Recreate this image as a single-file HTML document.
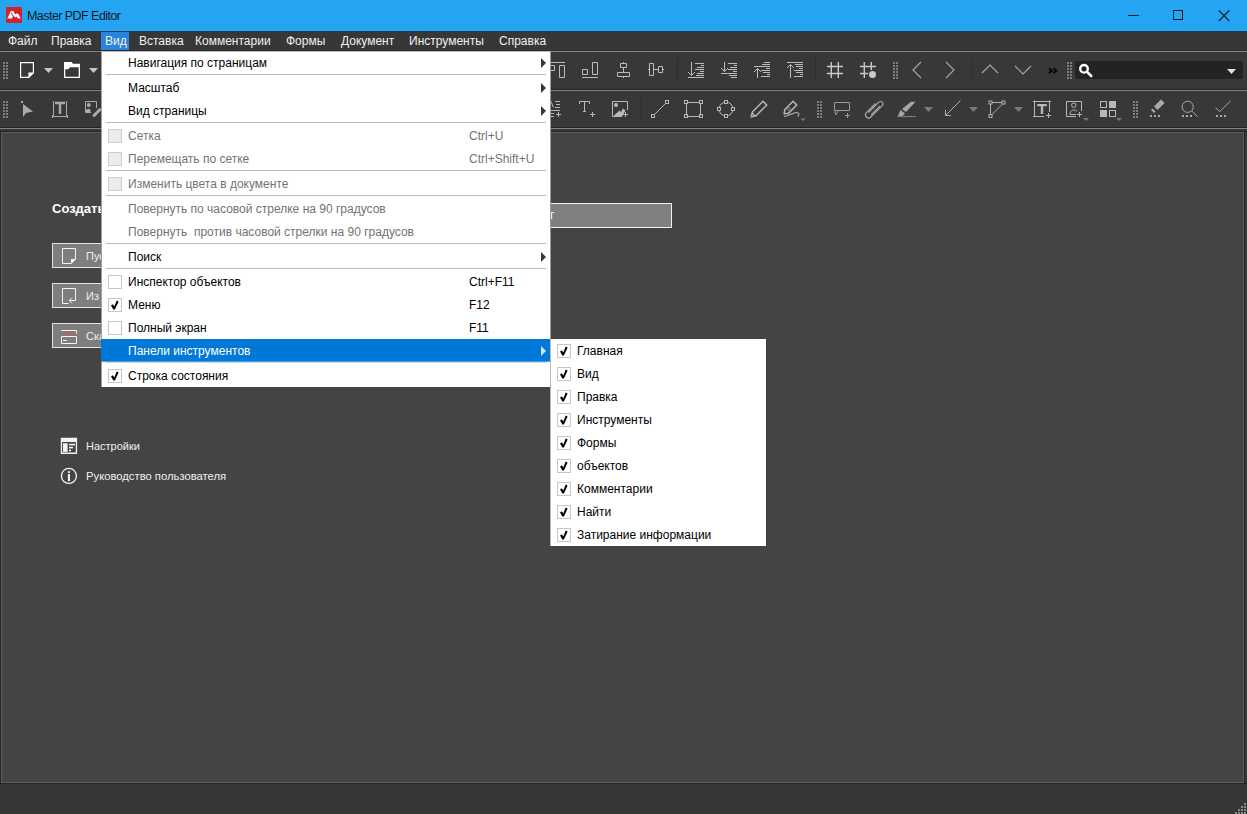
<!DOCTYPE html>
<html><head><meta charset="utf-8">
<style>
*{margin:0;padding:0;box-sizing:border-box}
html,body{width:1247px;height:814px;overflow:hidden;background:#373737;font-family:"Liberation Sans",sans-serif;font-size:12px}
.a{position:absolute}
#title{left:0;top:0;width:1247px;height:31px;background:#25a4f1}
#tline{left:0;top:31px;width:1247px;height:1px;background:#163e58}
#menubar{left:0;top:32px;width:1247px;height:19px;background:#373737}
.mb{position:absolute;top:32px;line-height:19px;color:#f0f0f0;white-space:nowrap}
.hl{left:0;width:1247px;height:1px;background:#828282}
.dl{left:0;width:1247px;height:1px}
#tb1{left:0;top:52px;width:1247px;height:38px;background:#383838}
#tb2{left:0;top:91px;width:1247px;height:37px;background:#383838}
#content{left:1px;top:132px;width:1243px;height:651px;background:#444444;border:1px solid #5e5e5e}
#menu{left:101px;top:51px;width:449px;height:336px;background:#fff}
.mi{position:absolute;left:0;width:449px;height:23px;line-height:23px;color:#000;white-space:nowrap}
.mi .t{position:absolute;left:27px;top:1px}
.mi .k{position:absolute;left:368px;top:1px}
.dis{color:#737373}
.sep{position:absolute;left:5px;width:440px;height:1px;background:#bdbdbd}
.cb{position:absolute;left:7px;top:5px;width:14px;height:14px;border:1px solid #c6c6c6;background:#fff}
.cbd{background:#ececec;border-color:#cdcdcd}
.arr{position:absolute;left:440px;top:7px;width:0;height:0;border-top:5px solid transparent;border-bottom:5px solid transparent;border-left:5px solid #383838}
#sub{left:550px;top:339px;width:216px;height:207px;background:#fff;border-left:1px solid #b9b9b9}
.si{position:absolute;left:0;width:216px;height:23px;line-height:23px;color:#000;white-space:nowrap}
.si .t{position:absolute;left:26px;top:1px}
.si .cb{left:6px}
.ck{position:absolute;left:1px;top:1px}
.btn{left:52px;width:300px;height:25px;background:#7e7e7e;border:1px solid #e4e4e4;color:#f0f0f0;font-size:11px;line-height:23px;white-space:nowrap}
.btn span{position:absolute;left:33px;top:1px}
.grip{position:absolute;width:6px;height:18px;background-image:radial-gradient(#8a8a8a 0,#8a8a8a 0) ;}
</style></head><body>
<div id="title" class="a"></div>
<div id="tline" class="a"></div>
<!-- app icon -->
<svg class="a" style="left:6px;top:7px" width="16" height="16" viewBox="6 7 16 16">
<rect x="6" y="7" width="16" height="16" rx="1.2" fill="#d51f2c"/>
<path d="M7.3 18.6 L10.8 11 L13.4 11 L15.2 14.6 L16.8 13.3 L18.6 14.2 L20.7 18.6 L17.7 18.6 L16.6 16.6 L15 17.4 L13.2 15.2 L12 18.6 Z" fill="#fff"/>
<path d="M11.5 12.5 L12.6 16" stroke="#d51f2c" stroke-width="0.9"/>
</svg>
<div class="a" style="left:27px;top:7px;line-height:18px;font-size:12.5px;color:#0b1b2e;letter-spacing:-0.55px;white-space:nowrap">Master PDF Editor</div>
<!-- window controls -->
<div class="a" style="left:1128px;top:15px;width:11px;height:1px;background:#0b1b2e"></div>
<div class="a" style="left:1173px;top:10px;width:10px;height:10px;border:1px solid #0b1b2e"></div>
<svg class="a" style="left:1218px;top:10px" width="12" height="12" viewBox="0 0 12 12"><path d="M0.8 0.5 L11.3 11 M11.3 0.5 L0.8 11" stroke="#0b1b2e" stroke-width="1.1"/></svg>

<div id="menubar" class="a"></div>
<div class="a" style="left:101px;top:32px;width:28px;height:19px;background:#2a83dc"></div>
<div class="mb" style="left:8px">Файл</div>
<div class="mb" style="left:51px">Правка</div>
<div class="mb" style="left:105px">Вид</div>
<div class="mb" style="left:139px">Вставка</div>
<div class="mb" style="left:195px">Комментарии</div>
<div class="mb" style="left:286px">Формы</div>
<div class="mb" style="left:341px">Документ</div>
<div class="mb" style="left:409px">Инструменты</div>
<div class="mb" style="left:499px">Справка</div>
<div class="a dl" style="top:50px;background:#2c2c2c"></div><div class="a hl" style="top:51px"></div>
<div id="tb1" class="a"></div>
<div class="a dl" style="top:89px;background:#262626"></div><div class="a hl" style="top:90px"></div>
<div id="tb2" class="a"></div>
<div class="a dl" style="top:127px;background:#232323"></div><div class="a hl" style="top:128px"></div><div class="a dl" style="top:131px;background:#222"></div><div class="a dl" style="top:783px;background:#262626"></div>

<svg class="a" style="left:0;top:0" width="1247" height="130" viewBox="0 0 1247 130">
<defs>
 <g id="grip" fill="#7e7e7e">
  <rect x="0" y="0" width="2" height="2"/><rect x="3" y="0" width="2" height="2"/>
  <rect x="0" y="3" width="2" height="2"/><rect x="3" y="3" width="2" height="2"/>
  <rect x="0" y="6" width="2" height="2"/><rect x="3" y="6" width="2" height="2"/>
  <rect x="0" y="9" width="2" height="2"/><rect x="3" y="9" width="2" height="2"/>
  <rect x="0" y="12" width="2" height="2"/><rect x="3" y="12" width="2" height="2"/>
  <rect x="0" y="15" width="2" height="2"/><rect x="3" y="15" width="2" height="2"/>
 </g>
</defs>
<!-- toolbar 1 -->
<use href="#grip" x="3" y="62"/>
<path d="M20.6 62.6 H33.4 V72.8 L28.8 77.4 H20.6 Z" fill="none" stroke="#fff" stroke-width="1.2"/>
<path d="M28.4 72.4 H33.6 L28.4 77.6 Z" fill="#fff"/>
<path d="M44 68 H53 L48.5 73 Z" fill="#c8c8c8"/>
<path fill-rule="evenodd" fill="#fff" d="M64 62 H71.5 L73 63.7 H80 V78 H64 Z M65.3 69.2 H68.3 L70 67.3 H78.7 V76.7 H65.3 Z"/>
<path d="M89 68 H98 L93.5 73 Z" fill="#c8c8c8"/>

<g fill="none" stroke="#bcbcbc" stroke-width="1">
 <!-- align top -->
 <path d="M549 62.5 H565 M549.5 65.5 H554.5 V70.5 H549.5 M559.5 65.5 H564.5 V77.5 H559.5 Z"/>
 <!-- align bottom -->
 <path d="M582.5 69.5 H587.5 V74.5 H582.5 Z M592.5 62.5 H597.5 V74.5 H592.5 Z M582 77.5 H598"/>
 <!-- align hcenter -->
 <path d="M623.5 62 V63 M623.5 68 V72 M623.5 77 V78 M620.5 63.5 H626.5 V67.5 H620.5 Z M617.5 72.5 H629.5 V76.5 H617.5 Z"/>
 <!-- align vcenter -->
 <path d="M648 69.5 H649 M654 69.5 H658 M663 69.5 H664 M649.5 63.5 H653.5 V75.5 H649.5 Z M658.5 66.5 H662.5 V72.5 H658.5 Z"/>
 <!-- arrange A -->
 <path d="M691.5 62 V75 M688 72 L691.5 75.5 L695 72 M695 63.5 H704 M701 65.5 H704 M697 67.5 H704 M695 69.5 H704 M700 71.5 H704 M697 73.5 H704 M696 75.5 H704 M688 77.5 H704"/>
 <!-- arrange B -->
 <path d="M724.5 62 V71.5 M721 68 L724.5 71.5 L728 68 M728 63.5 H737 M734 65.5 H737 M730 67.5 H737 M728 69.5 H737 M733 71.5 H737 M721 73.5 H737 M729 75.5 H737 M731 77.5 H737"/>
 <!-- arrange C -->
 <path d="M757.5 68.5 V78 M754 72 L757.5 68.5 L761 72 M764 62.5 H770 M762 64.5 H770 M754 66.5 H770 M766 68.5 H770 M761 70.5 H770 M763 72.5 H770 M767 74.5 H770 M761 76.5 H770"/>
 <!-- arrange D -->
 <path d="M790.5 64.5 V78 M787 68 L790.5 64.5 L794 68 M787 62.5 H803 M795 64.5 H803 M796 66.5 H803 M799 68.5 H803 M794 70.5 H803 M796 72.5 H803 M800 74.5 H803 M794 76.5 H803"/>
</g>
<!-- separators tb1 -->
<rect x="677" y="57" width="1" height="24" fill="#2e2e2e"/>
<rect x="815" y="57" width="1" height="24" fill="#2e2e2e"/>
<rect x="971" y="58" width="1" height="23" fill="#2e2e2e"/>
<!-- grids -->
<g fill="none" stroke="#c8c8c8" stroke-width="1.4">
 <path d="M831.3 62 V78 M838.3 62 V78 M827 66.5 H843 M827 73.5 H843"/>
 <path d="M864.3 62 V78 M871.3 62 V70 M860 66.5 H876 M860 73.5 H868"/>
</g>
<circle cx="872.5" cy="74.5" r="3.5" fill="#c8c8c8"/>
<use href="#grip" x="893" y="62"/>
<g fill="none" stroke="#a8a8a8" stroke-width="1.1">
 <path d="M921 62 L913 70 L921 78"/>
 <path d="M946 62 L954 70 L946 78"/>
 <path d="M982 73 L990 65 L998 73"/>
 <path d="M1015 66 L1023 74 L1031 66"/>
</g>
<path d="M1049 68.5 L1052 70.7 L1049 73 M1053.5 68.5 L1056.5 70.7 L1053.5 73" fill="none" stroke="#000" stroke-width="1.6"/>
<use href="#grip" x="1067" y="62"/>
<rect x="1075" y="61" width="168" height="18" rx="3" fill="#232323"/>
<path d="M1087.3 72.1 L1091.2 76" stroke="#fff" stroke-width="2.6" stroke-linecap="round"/>
<circle cx="1084" cy="68.8" r="3.8" fill="#232323" stroke="#fff" stroke-width="2.4"/>
<path d="M1227 69 H1236 L1231.5 74 Z" fill="#e0e0e0"/>

<!-- toolbar 2 -->
<use href="#grip" x="3" y="101"/>
<rect x="21" y="101" width="2" height="2" fill="#aaa"/>
<path d="M23 104 L33 111.5 L26 113 L23 117 Z" fill="#aaa"/>
<g fill="none" stroke="#aaa" stroke-width="1">
 <path d="M53.5 101 V116.5 M66.5 101 V116.5 M52.5 116.5 H67.5 M52.5 115 V118 M67.5 115 V118"/>
</g>
<path d="M55 101.8 H65 V104.3 H61.2 V114 H58.8 V104.3 H55 Z" fill="#aaa"/>
<g fill="none" stroke="#aaa" stroke-width="1">
 <path d="M96.5 108 V101.5 H85.5 V112.5 H91"/>
</g>
<circle cx="88.8" cy="105" r="2" fill="#aaa"/>
<path d="M86 112.5 V110 Q88.8 107.5 90.5 110 V112.5 Z" fill="#aaa"/>
<path d="M94 115.5 L100 109.5" stroke="#aaa" stroke-width="3" stroke-linecap="round"/>

<g fill="none" stroke="#b8b8b8" stroke-width="1">
 <!-- partial list icon -->
 <path d="M555 101.5 H560 M556 104.5 H560 M555 107.5 H560 M549 110.5 H560 M549 113.5 H554 M549 116.5 H554 M556 114.5 H561 M558.5 112 V117"/>
 <path d="M549.5 104 L551 101.5 L553.5 107.5"/>
 <!-- T+ -->
 <path d="M579.5 104 V101.5 H589.5 V104 M584.5 101.5 V111.5 M583 111.5 H586 M590 114.5 H595 M592.5 112 V117"/>
 <!-- image+ -->
 <path d="M627.5 110 V101.5 H612.5 V116.5 H622"/>
 <path d="M623 114.5 H628 M625.5 112 V117"/>
</g>
<circle cx="616" cy="105" r="2" fill="#b8b8b8"/>
<path d="M613 116.5 L619.5 110.5 L621 112 L623 108.5 L625.5 110.5 L622 116.5 Z" fill="#b8b8b8"/>
<rect x="641" y="96" width="1" height="24" fill="#2e2e2e"/>
<g fill="none" stroke="#b8b8b8" stroke-width="1">
 <!-- line -->
 <path d="M654 115 L666 103"/>
 <rect x="651.5" y="114.5" width="3" height="3"/>
 <rect x="665.5" y="100.5" width="3" height="3"/>
 <!-- rect -->
 <path d="M686.5 103.5 V115.5 M700.5 103.5 V115.5 M687.5 102.5 H699.5 M687.5 116.5 H699.5"/>
 <rect x="684.5" y="100.5" width="3" height="3"/><rect x="699.5" y="100.5" width="3" height="3"/>
 <rect x="684.5" y="114.5" width="3" height="3"/><rect x="699.5" y="114.5" width="3" height="3"/>
 <!-- circle -->
 <circle cx="726" cy="109" r="7"/>
</g>
<g fill="#383838" stroke="#b8b8b8" stroke-width="1">
 <rect x="724.5" y="100.5" width="3" height="3"/><rect x="724.5" y="114.5" width="3" height="3"/>
 <rect x="717.5" y="107.5" width="3" height="3"/><rect x="731.5" y="107.5" width="3" height="3"/>
</g>
<g fill="none" stroke="#b8b8b8" stroke-width="1">
 <!-- pencil -->
 <path d="M763 101.3 L766.7 105 L756 115.7 L751.3 116.7 L752.3 112 Z" stroke-width="1.5"/>
</g>
<path d="M752.3 112 L756 115.7 L751.3 116.7 Z" fill="#b8b8b8"/>
<path d="M751.8 116.2 L754.5 113.5" stroke="#383838" stroke-width="0.8"/>
<g fill="none" stroke="#b8b8b8" stroke-width="1">
 <!-- pen -->
 <path d="M793 101.3 L796.7 105 L788.5 113.2 L784.2 113.7 L784.8 109.5 Z" stroke-width="1.5"/>
 <path d="M787 108.5 L789.5 111 M788.5 107 L791 109.5" stroke-width="0.9"/>
 <path d="M784 116.5 C789 116 793 112.5 796.5 112.5 C799 112.5 800 114.5 797.5 116.5" stroke-width="1.1"/>
</g>
<path d="M800 118.5 H806 L803 121 Z" fill="#777"/>
<use href="#grip" x="817" y="101"/>
<g fill="none" stroke="#9a9a9a" stroke-width="1">
 <!-- comment+ -->
 <path d="M834.5 102.5 H849.5 V110.5 H834.5 Z M835 111 L835.5 115 L838.5 111"/>
 <path d="M845 115.5 H850 M847.5 113 V118"/>
</g>
<g fill="none" stroke="#aaa" stroke-width="1.1">
 <!-- clip -->
 <path d="M868.5 112.5 L878.8 102.2 A2.4 2.4 0 0 1 882.2 105.6 L870.8 117 A3.1 3.1 0 0 1 866.4 112.6 L875.5 103.5 M871 114.8 L880 105.8"/>
</g>
<!-- highlighter -->
<path d="M902 109 L911 101.8 L915.5 101.8 L906 112 Z" fill="#a8a8a8"/>
<path d="M900.5 110 L905 113.5 L902.5 116 L898 116 Z" fill="#a8a8a8"/>
<path d="M897 116.5 H916" stroke="#7a7a7a" stroke-width="1.2"/>
<path d="M924 107 H933 L928.5 112 Z" fill="#7a7a7a"/>
<g fill="none" stroke="#b0b0b0" stroke-width="1">
 <!-- arrow -->
 <path d="M960.5 100.5 L946 115 M945.5 110 V115.5 H951"/>
 <!-- polygon -->
 <path d="M990.5 104 V114 M992 102.5 H1002 M1002.5 104 L992 114.5"/>
 <rect x="989" y="101" width="3" height="3"/><rect x="1002" y="101" width="3" height="3"/><rect x="989" y="114.5" width="3" height="3"/>
</g>
<path d="M969 107 H978 L973.5 112 Z" fill="#7a7a7a"/>
<path d="M1014 107 H1023 L1018.5 112 Z" fill="#7a7a7a"/>
<g fill="none" stroke="#b8b8b8" stroke-width="1">
 <!-- text box -->
 <path d="M1034.5 100.5 V117 M1049.5 100.5 V112 M1033 101.5 H1051 M1033 116.5 H1044 M1046 115.5 H1051 M1048.5 113 V118"/>
</g>
<path d="M1037.2 104 H1046.8 V106.3 H1043.2 V114 H1040.8 V106.3 H1037.2 Z" fill="#b8b8b8"/>
<g fill="none" stroke="#b8b8b8" stroke-width="1">
 <!-- person -->
 <path d="M1081.5 111 V101.5 H1066.5 V116.5 H1076"/>
 <circle cx="1073.8" cy="105.2" r="2.2"/>
 <path d="M1070 114.5 C1070 111 1072 110 1074 110 C1075.5 110 1076.5 110.5 1077 111.5 M1070 114.5 H1076"/>
 <path d="M1077 114.5 H1082 M1079.5 112 V117"/>
 <!-- grid outline squares -->
 <rect x="1100.5" y="101.5" width="6" height="6"/>
 <rect x="1109.5" y="110.5" width="6" height="6"/>
</g>
<rect x="1109" y="101" width="7" height="7" fill="#b8b8b8"/>
<rect x="1100" y="110" width="7" height="7" fill="#b8b8b8"/>
<path d="M1083 118 H1089 L1086 121 Z" fill="#777"/>
<path d="M1116 118 H1122 L1119 121 Z" fill="#777"/>
<use href="#grip" x="1133" y="101"/>
<!-- eraser -->
<path d="M1154 106.5 L1161 99.5 L1164.5 103 L1157.5 110 Z" fill="#aaa"/>
<path d="M1151 110 L1152.5 108.5 L1155.5 111.5 L1154 113 Z" fill="#aaa"/>
<g fill="#aaa">
 <rect x="1150" y="115" width="2" height="2"/><rect x="1154" y="115" width="2" height="2"/><rect x="1158" y="115" width="2" height="2"/>
 <rect x="1182" y="115" width="2" height="2"/><rect x="1186" y="115" width="2" height="2"/><rect x="1190" y="115" width="2" height="2"/>
 <rect x="1216" y="115" width="2" height="2"/><rect x="1220" y="115" width="2" height="2"/><rect x="1224" y="115" width="2" height="2"/>
</g>
<g fill="none" stroke="#aaa" stroke-width="1">
 <circle cx="1187.7" cy="106.8" r="5.6"/>
 <path d="M1191.7 110.8 L1197.5 116.7"/>
 <path d="M1215.5 107.5 L1219.7 111.7 L1230.5 101"/>
</g>
</svg>

<div class="a" style="left:0;top:131px;width:1245px;height:653px;background:#242424"></div>
<div id="content" class="a"></div>

<!-- content items -->
<div class="a" style="left:52px;top:200px;line-height:18px;font-size:13px;font-weight:bold;color:#fff;white-space:nowrap">Создать</div>
<div class="a btn" style="top:243px"><span>Пустой документ</span></div>
<div class="a btn" style="top:283px"><span>Из файла</span></div>
<div class="a btn" style="top:323px"><span>Сканер</span></div>
<svg class="a" style="left:0;top:0" width="100" height="360" viewBox="0 0 100 360">
 <path d="M62.5 248.5 H75.5 V259 L71 263.5 H62.5 Z" fill="none" stroke="#f4f4f4" stroke-width="1"/>
 <path d="M71 259 H76 L71 264 Z" fill="#f4f4f4"/>
 <path d="M68.6 303.5 H62.5 V288.5 H75.5 V300.5 H69.5 M72 297.7 L69.3 300.5 L72 303.3" fill="none" stroke="#f4f4f4" stroke-width="1"/>
 <path d="M61 330.5 H76.5 V333.5 M61.5 336.5 H76.5 V343.5 H61.5 Z M63 340.5 H67" fill="none" stroke="#f4f4f4" stroke-width="1"/>
 <path d="M64 333.2 H73.7" stroke="#c85a5a" stroke-width="1.8"/>
</svg>
<div class="a" style="left:420px;top:203px;width:252px;height:25px;background:#808080;border:1px solid #f2f2f2"></div>
<div class="a" style="left:550px;top:206px;line-height:18px;font-size:12px;color:#fff">г</div>
<svg class="a" style="left:0;top:430px" width="90" height="60" viewBox="0 430 90 60">
 <path fill-rule="evenodd" fill="#f4f4f4" d="M60.8 437.8 H77.1 V453.9 H60.8 Z M62.1 442 H75.8 V452.6 H62.1 Z"/>
 <rect x="63" y="443.2" width="4.6" height="8.7" fill="#f4f4f4"/>
 <rect x="69" y="443.8" width="6" height="1.6" fill="#f4f4f4"/>
 <rect x="69" y="446.8" width="4" height="1.6" fill="#f4f4f4"/>
 <rect x="69" y="449.7" width="2" height="1.6" fill="#f4f4f4"/>
 <circle cx="68.9" cy="475.9" r="7.5" fill="none" stroke="#f4f4f4" stroke-width="1.3"/>
 <rect x="67.9" y="471.2" width="2.1" height="1.7" fill="#f4f4f4"/>
 <rect x="67.9" y="474.1" width="2.1" height="7" fill="#f4f4f4"/>
</svg>
<div class="a" style="left:86px;top:437px;line-height:18px;font-size:11px;color:#f0f0f0;white-space:nowrap">Настройки</div>
<div class="a" style="left:86px;top:467px;line-height:18px;font-size:11.25px;color:#f0f0f0;white-space:nowrap">Руководство пользователя</div>
<svg class="a" style="left:1230px;top:800px" width="17" height="14" viewBox="1230 800 17 14" fill="#8a8a8a">
 <rect x="1244" y="803" width="2" height="2"/>
 <rect x="1241" y="806" width="2" height="2"/><rect x="1244" y="806" width="2" height="2"/>
 <rect x="1238" y="809" width="2" height="2"/><rect x="1241" y="809" width="2" height="2"/><rect x="1244" y="809" width="2" height="2"/>
 <rect x="1235" y="812" width="2" height="2"/><rect x="1238" y="812" width="2" height="2"/><rect x="1241" y="812" width="2" height="2"/><rect x="1244" y="812" width="2" height="2"/>
</svg>

<!-- dropdown menu -->
<div id="menu" class="a">
 <div class="a" style="left:0;top:0;width:1px;height:336px;background:#a0a0a0"></div>
 <div class="a" style="left:0;top:0;width:449px;height:1px;background:#b8b8b8"></div>
 <div class="mi" style="top:0"><span class="t">Навигация по страницам</span><i class="arr"></i></div>
 <div class="sep" style="top:23px"></div>
 <div class="mi" style="top:25px"><span class="t">Масштаб</span><i class="arr"></i></div>
 <div class="mi" style="top:48px"><span class="t">Вид страницы</span><i class="arr"></i></div>
 <div class="sep" style="top:71px"></div>
 <div class="mi dis" style="top:73px"><i class="cb cbd"></i><span class="t">Сетка</span><span class="k">Ctrl+U</span></div>
 <div class="mi dis" style="top:96px"><i class="cb cbd"></i><span class="t">Перемещать по сетке</span><span class="k">Ctrl+Shift+U</span></div>
 <div class="sep" style="top:119px"></div>
 <div class="mi dis" style="top:121px"><i class="cb cbd"></i><span class="t">Изменить цвета в документе</span></div>
 <div class="sep" style="top:144px"></div>
 <div class="mi dis" style="top:146px"><span class="t">Повернуть по часовой стрелке на 90 градусов</span></div>
 <div class="mi dis" style="top:169px"><span class="t">Повернуть&nbsp; против часовой стрелки на 90 градусов</span></div>
 <div class="sep" style="top:192px"></div>
 <div class="mi" style="top:194px"><span class="t">Поиск</span><i class="arr"></i></div>
 <div class="sep" style="top:217px"></div>
 <div class="mi" style="top:219px"><i class="cb"></i><span class="t">Инспектор объектов</span><span class="k">Ctrl+F11</span></div>
 <div class="mi" style="top:242px"><i class="cb"><svg class="ck" width="11" height="11" viewBox="0 0 11 11"><path d="M1 5.6 L2.9 4.3 L4.3 6.4 L6.7 0.6 L8.6 1.4 L4.9 9.5 L3.4 9.5 Z" fill="#000"/></svg></i><span class="t">Меню</span><span class="k">F12</span></div>
 <div class="mi" style="top:265px"><i class="cb"></i><span class="t">Полный экран</span><span class="k">F11</span></div>
 <div class="mi" style="top:288px;background:linear-gradient(#0078d7 0,#0078d7 22px,#4a9fe6 22px);color:#fff"><span class="t">Панели инструментов</span><i class="arr" style="border-left-color:#cfe6ff"></i></div>
 <div class="sep" style="top:311px;background:#ccd3da"></div>
 <div class="mi" style="top:313px"><i class="cb"><svg class="ck" width="11" height="11" viewBox="0 0 11 11"><path d="M1 5.6 L2.9 4.3 L4.3 6.4 L6.7 0.6 L8.6 1.4 L4.9 9.5 L3.4 9.5 Z" fill="#000"/></svg></i><span class="t">Строка состояния</span></div>
</div>

<div class="a" style="left:550px;top:51px;width:1px;height:336px;background:#9a9a9a"></div>
<!-- submenu -->
<div id="sub" class="a">
 <div class="si" style="top:0"><i class="cb"><svg class="ck" width="11" height="11" viewBox="0 0 11 11"><path d="M1 5.6 L2.9 4.3 L4.3 6.4 L6.7 0.6 L8.6 1.4 L4.9 9.5 L3.4 9.5 Z" fill="#000"/></svg></i><span class="t">Главная</span></div>
 <div class="si" style="top:23px"><i class="cb"><svg class="ck" width="11" height="11" viewBox="0 0 11 11"><path d="M1 5.6 L2.9 4.3 L4.3 6.4 L6.7 0.6 L8.6 1.4 L4.9 9.5 L3.4 9.5 Z" fill="#000"/></svg></i><span class="t">Вид</span></div>
 <div class="si" style="top:46px"><i class="cb"><svg class="ck" width="11" height="11" viewBox="0 0 11 11"><path d="M1 5.6 L2.9 4.3 L4.3 6.4 L6.7 0.6 L8.6 1.4 L4.9 9.5 L3.4 9.5 Z" fill="#000"/></svg></i><span class="t">Правка</span></div>
 <div class="si" style="top:69px"><i class="cb"><svg class="ck" width="11" height="11" viewBox="0 0 11 11"><path d="M1 5.6 L2.9 4.3 L4.3 6.4 L6.7 0.6 L8.6 1.4 L4.9 9.5 L3.4 9.5 Z" fill="#000"/></svg></i><span class="t">Инструменты</span></div>
 <div class="si" style="top:92px"><i class="cb"><svg class="ck" width="11" height="11" viewBox="0 0 11 11"><path d="M1 5.6 L2.9 4.3 L4.3 6.4 L6.7 0.6 L8.6 1.4 L4.9 9.5 L3.4 9.5 Z" fill="#000"/></svg></i><span class="t">Формы</span></div>
 <div class="si" style="top:115px"><i class="cb"><svg class="ck" width="11" height="11" viewBox="0 0 11 11"><path d="M1 5.6 L2.9 4.3 L4.3 6.4 L6.7 0.6 L8.6 1.4 L4.9 9.5 L3.4 9.5 Z" fill="#000"/></svg></i><span class="t">объектов</span></div>
 <div class="si" style="top:138px"><i class="cb"><svg class="ck" width="11" height="11" viewBox="0 0 11 11"><path d="M1 5.6 L2.9 4.3 L4.3 6.4 L6.7 0.6 L8.6 1.4 L4.9 9.5 L3.4 9.5 Z" fill="#000"/></svg></i><span class="t">Комментарии</span></div>
 <div class="si" style="top:161px"><i class="cb"><svg class="ck" width="11" height="11" viewBox="0 0 11 11"><path d="M1 5.6 L2.9 4.3 L4.3 6.4 L6.7 0.6 L8.6 1.4 L4.9 9.5 L3.4 9.5 Z" fill="#000"/></svg></i><span class="t">Найти</span></div>
 <div class="si" style="top:184px"><i class="cb"><svg class="ck" width="11" height="11" viewBox="0 0 11 11"><path d="M1 5.6 L2.9 4.3 L4.3 6.4 L6.7 0.6 L8.6 1.4 L4.9 9.5 L3.4 9.5 Z" fill="#000"/></svg></i><span class="t">Затирание информации</span></div>
</div>
</body></html>
